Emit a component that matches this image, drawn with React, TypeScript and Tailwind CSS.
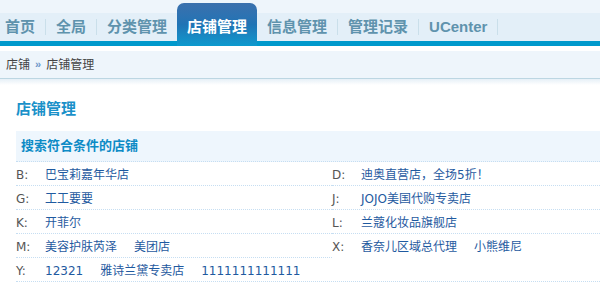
import React from "react";

const rows: { l: [string, string[]]; r?: [string, string[]]; full?: boolean; rBorder?: boolean }[] = [
  { l: ["B:", ["巴宝莉嘉年华店"]], r: ["D:", ["迪奥直营店，全场5折！"]] },
  { l: ["G:", ["工工要要"]], r: ["J:", ["JOJO美国代购专卖店"]] },
  { l: ["K:", ["开菲尔"]], r: ["L:", ["兰蔻化妆品旗舰店"]] },
  { l: ["M:", ["美容护肤芮泽", "美团店"]], r: ["X:", ["香奈儿区域总代理", "小熊维尼"]], rBorder: false },
  { l: ["Y:", ["12321", "雅诗兰黛专卖店", "1111111111111"]], full: true },
];

function Cell({ k, names }: { k: string; names: string[] }) {
  return (
    <div className="flex items-center h-full pt-[2px]">
      <span className="w-[29px] text-[#555] shrink-0">{k}</span>
      <div className="flex gap-[17px] whitespace-nowrap text-[#1f5aa0]">
        {names.map((n) => (
          <span key={n}>{n}</span>
        ))}
      </div>
    </div>
  );
}

function Sep() {
  return <div className="w-px h-[16px] bg-[#cadfea] self-center" />;
}

function Tab({ t, first }: { t: string; first?: boolean }) {
  return (
    <div className={`flex items-center h-full ${first ? "pl-[5px]" : "pl-[10px]"} pr-[10px] text-[15px] font-bold text-[#5f93ad]`}>
      {t}
    </div>
  );
}

export default function App() {
  return (
    <div className="w-[600px] h-[291px] overflow-hidden bg-white font-['Liberation_Sans','Noto_Sans_CJK_SC',sans-serif]">
      {/* header */}
      <div className="bg-[#eef5fb] pt-[13px]">
        <div className="flex h-[28px] bg-[#e3eff8]">
          <Tab t="首页" first />
          <Sep />
          <Tab t="全局" />
          <Sep />
          <Tab t="分类管理" />
          <div className="relative z-10 mt-[-10px] h-[43px] w-[80px] rounded-t-[7px] bg-gradient-to-b from-[#3a70ad] via-[#1f74b5] to-[#0c9ace] flex justify-center pt-[13px] text-[15px] font-bold text-white">
            店铺管理
          </div>
          <Tab t="信息管理" />
          <Sep />
          <Tab t="管理记录" />
          <Sep />
          <Tab t="UCenter" />
          <Sep />
        </div>
        <div className="h-[5px] bg-[#0099cc]" />
      </div>
      <div className="h-[5px] bg-white" />
      {/* breadcrumb */}
      <div className="h-[28px] bg-[#eef5fb] border-b border-[#bcd6e2] flex items-center pl-[6px] text-[12px] text-[#444]">
        <span>店铺</span>
        <span className="mx-[5px] text-[11px] font-bold text-[#6d95c9] leading-none">»</span>
        <span>店铺管理</span>
      </div>
      <div className="h-[6px] bg-gradient-to-b from-[#e6f0f7] to-white" />
      {/* content */}
      <div className="pl-[16px]">
        <div className="mt-[14px] h-[20px] flex items-center text-[15px] font-bold text-[#1a91c9]">店铺管理</div>
        <div className="mt-[12px] h-[31px] bg-[#eef6fd] border-b border-dotted border-[#c6def2] flex items-center pl-[5px] text-[13px] font-bold text-[#0d8bc6]">
          搜索符合条件的店铺
        </div>
        <div className="text-[12px] font-['DejaVu_Sans','Noto_Sans_CJK_SC',sans-serif]">
          {rows.map((r, i) =>
            r.full ? (
              <div key={i} className="h-[24px] border-b border-dotted border-[#c6def2]">
                <Cell k={r.l[0]} names={r.l[1]} />
              </div>
            ) : (
              <div key={i} className="grid grid-cols-[316px_1fr] h-[24px]">
                <div className="border-b border-dotted border-[#c6def2]">
                  <Cell k={r.l[0]} names={r.l[1]} />
                </div>
                <div className={r.rBorder === false ? "" : "border-b border-dotted border-[#c6def2]"}>
                  {r.r && <Cell k={r.r[0]} names={r.r[1]} />}
                </div>
              </div>
            )
          )}
        </div>
      </div>
    </div>
  );
}
